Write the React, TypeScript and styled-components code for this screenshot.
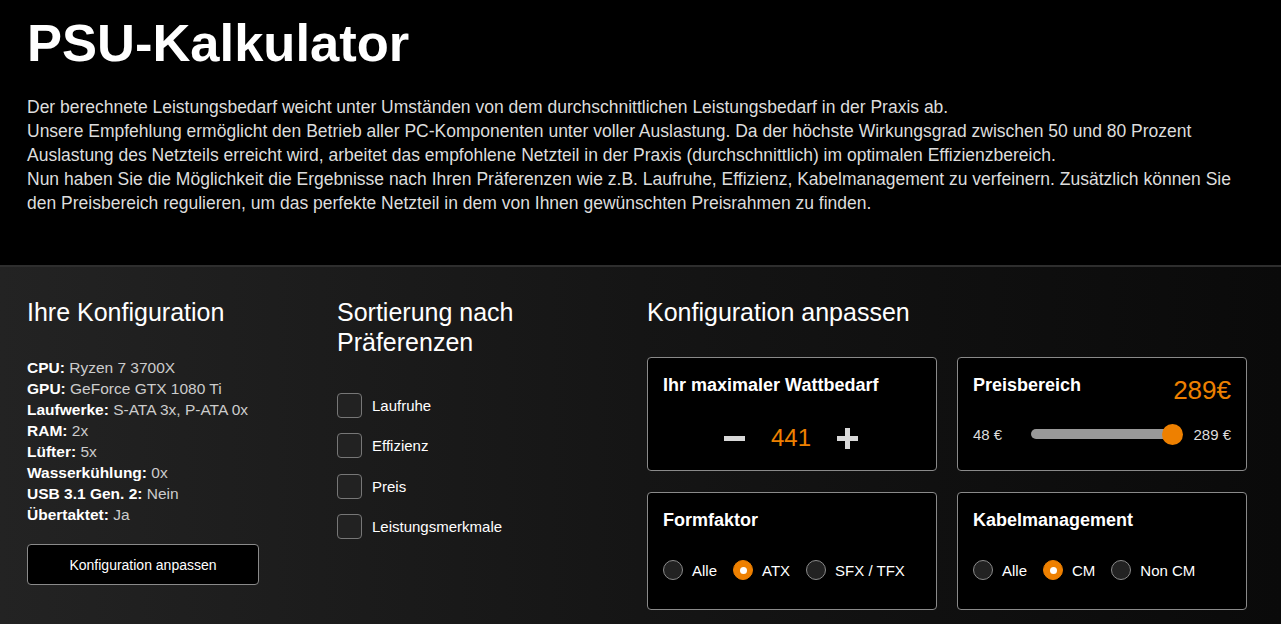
import React from "react";
import styled, { createGlobalStyle } from "styled-components";

const Global = createGlobalStyle`
  html, body { margin: 0; padding: 0; background: #000; }
  body { font-family: "Liberation Sans", Arial, sans-serif; color: #fff; }
  * { box-sizing: border-box; }
`;

const Page = styled.div`
  width: 1281px;
  min-height: 624px;
  background: #000;
`;

const Header = styled.header`
  background: #000;
  padding: 13px 27px 50px 27px;
`;

const Title = styled.h1`
  margin: 0;
  font-size: 52.5px;
  line-height: 60px;
  font-weight: 700;
  color: #fff;
`;

const Intro = styled.p`
  margin: 22px 0 0 0;
  width: 1218px;
  font-size: 17.5px;
  line-height: 24px;
  color: #ddd;
  font-weight: 400;
`;

const Lower = styled.section`
  border-top: 2px solid #2e2e2e;
  background: linear-gradient(to right, #232323 0%, #151515 50%, #0a0a0a 100%);
  padding: 30px 27px 40px 27px;
  display: grid;
  grid-template-columns: 310px 310px 620px;
`;

const Column = styled.div`
  display: flex;
  flex-direction: column;
  padding-right: 20px;
`;

const Heading = styled.h2`
  margin: 0;
  font-size: 25px;
  line-height: 30px;
  font-weight: 400;
  color: #fff;
`;

const SpecList = styled.ul`
  list-style: none;
  margin: 30px 0 0 0;
  padding: 0;
  font-size: 15.5px;
  line-height: 21px;
`;

const SpecItem = styled.li`
  color: #ccc;
  b { color: #fff; font-weight: 700; }
`;

const OutlineButton = styled.button`
  margin-top: 19px;
  width: 232px;
  height: 41px;
  background: #000;
  border: 1px solid #8a8a8a;
  border-radius: 4px;
  color: #fff;
  font-family: "Liberation Sans", Arial, sans-serif;
  font-size: 14px;
  cursor: pointer;
`;

const CheckList = styled.div`
  margin-top: 36px;
  display: flex;
  flex-direction: column;
  gap: 16.5px;
`;

const CheckRow = styled.label`
  display: flex;
  align-items: center;
  gap: 10px;
  font-size: 15px;
  color: #fff;
  height: 24px;
`;

const CheckBox = styled.span`
  width: 25px;
  height: 25px;
  border: 1px solid #777;
  border-radius: 4px;
  background: #222;
  flex: none;
`;

const CardGrid = styled.div`
  margin-top: 30px;
  display: grid;
  grid-template-columns: 290px 290px;
  column-gap: 20px;
  row-gap: 21px;
`;

const Card = styled.div<{ $h: number }>`
  height: ${(p) => p.$h}px;
  background: #000;
  border: 1px solid #8a8a8a;
  border-radius: 4px;
  padding: 17px 15px 0 15px;
  display: flex;
  flex-direction: column;
`;

const CardHead = styled.div`
  display: flex;
  justify-content: space-between;
  align-items: flex-start;
`;

const CardTitle = styled.h3`
  margin: 0;
  font-size: 18px;
  line-height: 20px;
  font-weight: 700;
  color: #fff;
`;

const Price = styled.span`
  font-size: 26px;
  line-height: 30px;
  color: #ee8000;
`;

const Stepper = styled.div`
  margin-top: 28px;
  height: 30px;
  display: flex;
  align-items: center;
  justify-content: center;
  gap: 25px;
  padding-right: 2px;
`;

const StepButton = styled.button`
  width: 21px;
  height: 21px;
  padding: 0;
  border: none;
  background: transparent;
  position: relative;
  cursor: pointer;
  &::before, &::after {
    content: "";
    position: absolute;
    background: #d8d8d8;
  }
  &::before {
    left: 0;
    right: 0;
    top: 8px;
    height: 5px;
  }
`;

const PlusButton = styled(StepButton)`
  &::after {
    top: 0;
    bottom: 0;
    left: 8px;
    width: 5px;
  }
`;

const Value = styled.span`
  font-size: 24px;
  color: #ee8000;
  width: 42px;
  text-align: center;
`;

const SliderRow = styled.div`
  margin-top: 17px;
  display: flex;
  align-items: center;
  font-size: 15px;
  color: #ddd;
  height: 24px;
`;

const Track = styled.div`
  flex: 1;
  margin: 0 12px 0 29px;
  height: 10px;
  border-radius: 5px;
  background: #999;
  position: relative;
`;

const Thumb = styled.span`
  position: absolute;
  right: -2px;
  top: 50%;
  width: 21px;
  height: 21px;
  margin-top: -10.5px;
  border-radius: 50%;
  background: #ee8000;
`;

const RadioRow = styled.div`
  margin-top: 28px;
  display: flex;
  align-items: center;
  height: 24px;
  gap: 16px;
`;

const RadioOption = styled.label`
  display: flex;
  align-items: center;
  gap: 9px;
  font-size: 15px;
  color: #fff;
`;

const RadioDot = styled.span<{ $on?: boolean }>`
  width: 20px;
  height: 20px;
  border-radius: 50%;
  flex: none;
  border: 1px solid ${(p) => (p.$on ? "#ee8000" : "#8a8a8a")};
  background: ${(p) => (p.$on ? "#ee8000" : "#222")};
  display: flex;
  align-items: center;
  justify-content: center;
  &::after {
    content: "";
    display: ${(p) => (p.$on ? "block" : "none")};
    width: 7px;
    height: 7px;
    border-radius: 50%;
    background: #fff;
  }
`;

const specs: [string, string][] = [
  ["CPU:", "Ryzen 7 3700X"],
  ["GPU:", "GeForce GTX 1080 Ti"],
  ["Laufwerke:", "S-ATA 3x, P-ATA 0x"],
  ["RAM:", "2x"],
  ["Lüfter:", "5x"],
  ["Wasserkühlung:", "0x"],
  ["USB 3.1 Gen. 2:", "Nein"],
  ["Übertaktet:", "Ja"],
];

const prefs = ["Laufruhe", "Effizienz", "Preis", "Leistungsmerkmale"];

function Radios({ options, selected }: { options: string[]; selected: number }) {
  return (
    <RadioRow>
      {options.map((o, i) => (
        <RadioOption key={o}>
          <RadioDot $on={i === selected} />
          {o}
        </RadioOption>
      ))}
    </RadioRow>
  );
}

export default function App() {
  return (
    <Page>
      <Global />
      <Header>
        <Title>PSU-Kalkulator</Title>
        <Intro>
          Der berechnete Leistungsbedarf weicht unter Umständen von dem durchschnittlichen Leistungsbedarf in der Praxis ab.
          <br />
          Unsere Empfehlung ermöglicht den Betrieb aller PC-Komponenten unter voller Auslastung. Da der höchste Wirkungsgrad zwischen 50 und 80 Prozent Auslastung des Netzteils erreicht wird, arbeitet das empfohlene Netzteil in der Praxis (durchschnittlich) im optimalen Effizienzbereich.
          <br />
          Nun haben Sie die Möglichkeit die Ergebnisse nach Ihren Präferenzen wie z.B. Laufruhe, Effizienz, Kabelmanagement zu verfeinern. Zusätzlich können Sie den Preisbereich regulieren, um das perfekte Netzteil in dem von Ihnen gewünschten Preisrahmen zu finden.
        </Intro>
      </Header>
      <Lower>
        <Column>
          <Heading>Ihre Konfiguration</Heading>
          <SpecList>
            {specs.map(([k, v]) => (
              <SpecItem key={k}>
                <b>{k}</b> {v}
              </SpecItem>
            ))}
          </SpecList>
          <OutlineButton>Konfiguration anpassen</OutlineButton>
        </Column>
        <Column>
          <Heading>Sortierung nach Präferenzen</Heading>
          <CheckList>
            {prefs.map((p) => (
              <CheckRow key={p}>
                <CheckBox />
                {p}
              </CheckRow>
            ))}
          </CheckList>
        </Column>
        <Column>
          <Heading>Konfiguration anpassen</Heading>
          <CardGrid>
            <Card $h={114}>
              <CardTitle>Ihr maximaler Wattbedarf</CardTitle>
              <Stepper>
                <StepButton aria-label="weniger" />
                <Value>441</Value>
                <PlusButton aria-label="mehr" />
              </Stepper>
            </Card>
            <Card $h={114}>
              <CardHead>
                <CardTitle>Preisbereich</CardTitle>
                <Price>289€</Price>
              </CardHead>
              <SliderRow>
                <span>48 €</span>
                <Track>
                  <Thumb />
                </Track>
                <span>289 €</span>
              </SliderRow>
            </Card>
            <Card $h={118}>
              <CardTitle>Formfaktor</CardTitle>
              <Radios options={["Alle", "ATX", "SFX / TFX"]} selected={1} />
            </Card>
            <Card $h={118}>
              <CardTitle>Kabelmanagement</CardTitle>
              <Radios options={["Alle", "CM", "Non CM"]} selected={1} />
            </Card>
          </CardGrid>
        </Column>
      </Lower>
    </Page>
  );
}
